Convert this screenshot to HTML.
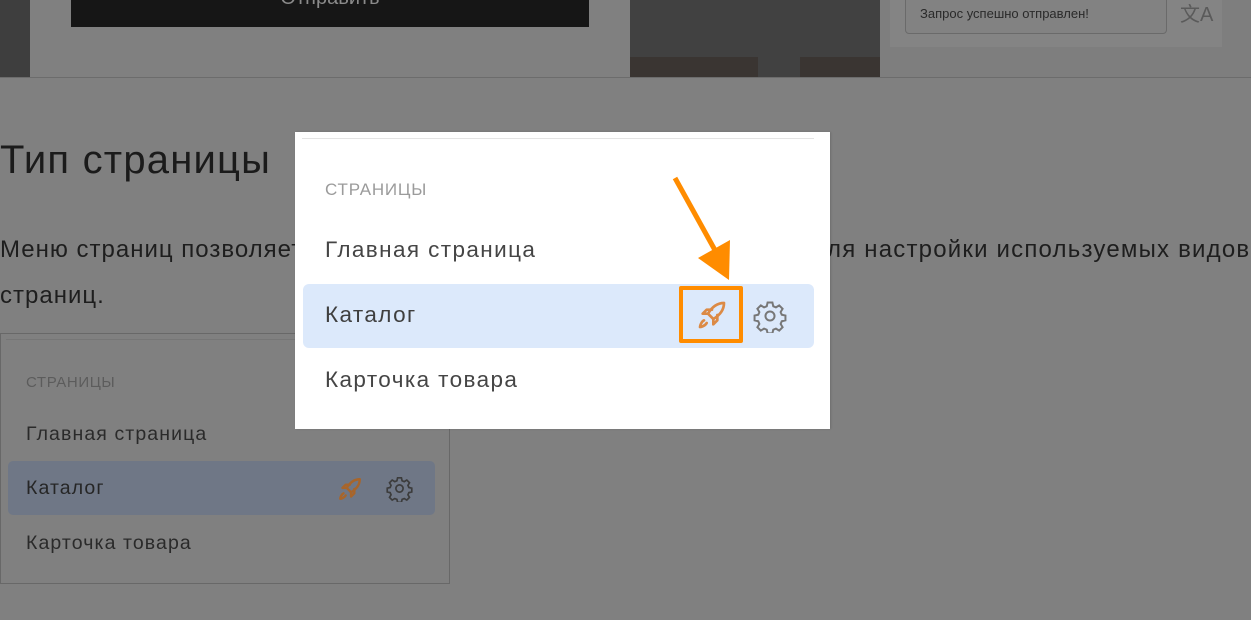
<!DOCTYPE html>
<html><head><meta charset="utf-8"><style>
*{margin:0;padding:0;box-sizing:border-box}
body{width:1251px;height:620px;background:#808080;position:relative;overflow:hidden;font-family:"Liberation Sans","DejaVu Sans",sans-serif}
.a{position:absolute}
.t{white-space:nowrap}
</style></head><body>
<div class="a" style="left:0;top:0;width:30px;height:77px;background:#3e3e3e"></div>
<div class="a" style="left:30px;top:0;width:600px;height:77px;background:#808080"></div>
<div class="a" style="left:71px;top:0;width:518px;height:27px;background:#161616;color:#8a8a8a;font-size:20px;text-align:center;line-height:0px;overflow:hidden"><span style="position:relative;top:-2px">Отправить</span></div>
<div class="a" style="left:630px;top:0;width:250px;height:77px;background:#414141"></div>
<div class="a" style="left:630px;top:57px;width:128px;height:20px;background:#3a3532"></div>
<div class="a" style="left:800px;top:57px;width:80px;height:20px;background:#3a3532"></div>
<div class="a" style="left:880px;top:0;width:371px;height:77px;background:#7e7e7e"></div>
<div class="a" style="left:890px;top:0;width:332px;height:47px;background:#848484"></div>
<div class="a" style="left:905px;top:-4px;width:262px;height:38px;border:1px solid #6a6a6a;border-radius:4px;background:#828282"></div>
<div class="a t" style="left:920px;top:6px;font-size:13px;color:#2a2a2a">Запрос успешно отправлен!</div>
<div class="a t" style="left:1180px;top:-2px;font-size:20px;color:#5a5a5a">文A</div>
<div class="a" style="left:0;top:77px;width:1251px;height:1px;background:#6c6c6c"></div>

<div class="a t" style="left:0;top:138px;font-size:40px;letter-spacing:1.2px;color:#1b1b1b">Тип страницы</div>
<div class="a t" style="left:0;top:236px;font-size:24px;letter-spacing:1px;color:#1e1e1e">Меню страниц позволяет переключаться</div>
<div class="a t" style="left:827px;top:236px;font-size:24px;letter-spacing:1.2px;color:#1e1e1e">ля настройки используемых видов</div>
<div class="a t" style="left:0;top:282px;font-size:24px;letter-spacing:1px;color:#1e1e1e">страниц.</div>

<div class="a" style="left:0;top:333px;width:450px;height:251px;border:1px solid #686868;background:#808080"></div>
<div class="a" style="left:6px;top:339px;width:440px;height:1px;background:#767676"></div>
<div class="a t" style="left:26px;top:374px;font-size:15px;letter-spacing:.6px;color:#5c5c5c">СТРАНИЦЫ</div>
<div class="a t" style="left:26px;top:423px;font-size:19.5px;letter-spacing:1.1px;color:#2a2a2a">Главная страница</div>
<div class="a" style="left:8px;top:461px;width:427px;height:54px;background:#6f7786;border-radius:5px"></div>
<div class="a t" style="left:26px;top:477px;font-size:19.5px;letter-spacing:1.1px;color:#262626">Каталог</div>
<div class="a t" style="left:26px;top:532px;font-size:19.5px;letter-spacing:1.1px;color:#2a2a2a">Карточка товара</div>
<svg class="a" style="left:337px;top:476px" width="26" height="26" viewBox="0 0 24 24" fill="none" stroke="#a8652a" stroke-width="2.2" stroke-linecap="round" stroke-linejoin="round"><path d="M21 3c-5 0-9 3-12 8l4 4c5-3 8-7 8-12z"/><path d="M9 11H5l3-3h4M13 15v4l3-3v-4"/><path d="M6 16c-2 1-3 4-3 5 1 0 4-1 5-3"/></svg>
<svg class="a" style="left:386px;top:475px" width="27" height="27" viewBox="0 0 24 24" fill="none" stroke="#3c3c3c" stroke-width="1.5"><circle cx="12" cy="12" r="3.2"/><path d="M10.3 2.5h3.4l.6 2.6 1.9.8 2.3-1.4 2.4 2.4-1.4 2.3.8 1.9 2.6.6v3.4l-2.6.6-.8 1.9 1.4 2.3-2.4 2.4-2.3-1.4-1.9.8-.6 2.6h-3.4l-.6-2.6-1.9-.8-2.3 1.4-2.4-2.4 1.4-2.3-.8-1.9-2.6-.6v-3.4l2.6-.6.8-1.9-1.4-2.3 2.4-2.4 2.3 1.4 1.9-.8z"/></svg>

<div class="a" style="left:295px;top:132px;width:535px;height:297px;background:#fff;box-shadow:1px 0 2px rgba(0,0,0,.15)"></div>
<div class="a" style="left:302px;top:138px;width:512px;height:1px;background:#e4e4e4"></div>
<div class="a t" style="left:325px;top:180px;font-size:17px;letter-spacing:.8px;color:#9b9b9b">СТРАНИЦЫ</div>
<div class="a t" style="left:325px;top:237px;font-size:22.5px;letter-spacing:1.4px;color:#454545">Главная страница</div>
<div class="a" style="left:303px;top:284px;width:511px;height:64px;background:#dce9fb;border-radius:6px"></div>
<div class="a t" style="left:325px;top:302px;font-size:22.5px;letter-spacing:1.4px;color:#3f3f3f">Каталог</div>
<div class="a t" style="left:325px;top:367px;font-size:22.5px;letter-spacing:1.4px;color:#454545">Карточка товара</div>
<div class="a" style="left:679px;top:286px;width:64px;height:57px;border:4px solid #ff8c00;border-radius:2px"></div>
<svg class="a" style="left:696px;top:299px" width="32" height="32" viewBox="0 0 24 24" fill="none" stroke="#dc8a45" stroke-width="2" stroke-linecap="round" stroke-linejoin="round"><path d="M21 3c-5 0-9 3-12 8l4 4c5-3 8-7 8-12z"/><path d="M9 11H5l3-3h4M13 15v4l3-3v-4"/><path d="M6 16c-2 1-3 4-3 5 1 0 4-1 5-3"/></svg>
<svg class="a" style="left:753px;top:299px" width="34" height="34" viewBox="0 0 24 24" fill="none" stroke="#777" stroke-width="1.4"><circle cx="12" cy="12" r="3.2"/><path d="M10.3 2.5h3.4l.6 2.6 1.9.8 2.3-1.4 2.4 2.4-1.4 2.3.8 1.9 2.6.6v3.4l-2.6.6-.8 1.9 1.4 2.3-2.4 2.4-2.3-1.4-1.9.8-.6 2.6h-3.4l-.6-2.6-1.9-.8-2.3 1.4-2.4-2.4 1.4-2.3-.8-1.9-2.6-.6v-3.4l2.6-.6.8-1.9-1.4-2.3 2.4-2.4 2.3 1.4 1.9-.8z"/></svg>
<svg class="a" style="left:0;top:0" width="1251" height="620"><line x1="675" y1="178" x2="716" y2="252" stroke="#ff8c00" stroke-width="5"/><polygon points="698,258 730,240 729,280" fill="#ff8c00"/></svg>
</body></html>
